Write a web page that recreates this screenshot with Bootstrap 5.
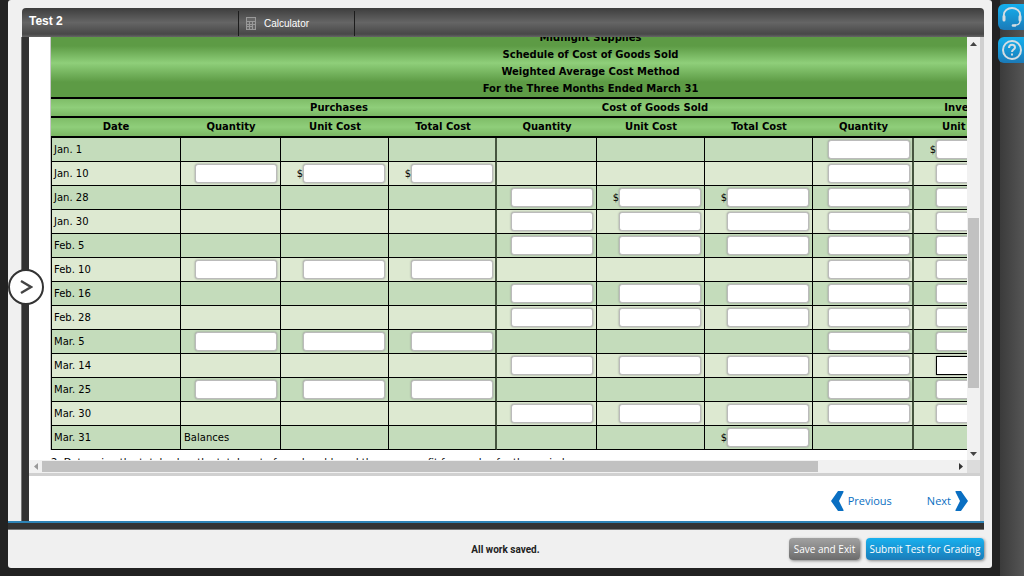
<!DOCTYPE html>
<html lang="en">
<head>
<meta charset="utf-8">
<meta name="viewport" content="width=device-width, initial-scale=1">
<title>Test 2</title>
<link href="https://cdn.jsdelivr.net/npm/bootstrap@5.3.0/dist/css/bootstrap.min.css" rel="stylesheet">
<style>
  body { background: #222; font-family: "Open Sans", sans-serif; font-size: 11px; }
  .shell { background: #f0f0f0; border-radius: 3px; margin: 0 8px 8px; padding-top: 8px; min-width: 0; }
  .tool-rail { width: 24px; background: linear-gradient(90deg, #3b3b3b, #555); padding-top: 4px; gap: 7px; }
  .rail-btn { width: 26px; height: 26px; margin-left: -2px; padding: 0 0 0 2px; border: 0; border-radius: 6px 0 0 6px; background: linear-gradient(#15b0ee, #1b7ab8); }
  .stage { margin: 0 8px 0 14px; }
  .top-bar { height: 29px; background: linear-gradient(#3d3d3d, #656565 50%, #484848 90%, #666); border-radius: 4px 4px 0 0; font-family: "Liberation Sans", sans-serif; color: #fff; }
  .test-title { width: 216px; padding: 4px 0 0 7px; font-size: 12px; line-height: 18px; font-weight: 700; }
  .calc-btn { width: 117px; height: 25px; padding: 0 0 0 7px; gap: 8px; border: 1px solid #1c1c1c; border-width: 0 1px; border-radius: 0; background: none; color: #fff; font-size: 10px; margin-top: 3px; }
  .work { background: #fff; border-left: 7px solid #333; border-right: 4px solid #d0d0d0; box-shadow: -1px 0 #777; }
  .sheet-view { min-width: 0; min-height: 0; }
  .sheet { margin: -8px 0 0 22px; width: 1079px; font-family: "DejaVu Sans", sans-serif; font-size: 10px; color: #000; }
  .ledger { table-layout: fixed; width: 1079px; border-collapse: separate; border-spacing: 0; box-shadow: -1px 0 #c8c8c8; }
  .ledger col.c-date { width: 130px; }
  .ledger col.c-qty { width: 100px; }
  .ledger col.c-cost { width: 108px; }
  .ledger col.c-stock { width: 101px; }
  .ledger th { padding: 0; text-align: center; font-weight: 700; line-height: 17px; border-bottom: 2px solid #000; background: linear-gradient(#7fbd68, #8fce7a 50%, #7ab663); }
  .ledger th.heading { background: linear-gradient(#5d9b45 25%, #8fcf7a 50%, #5d9b45 78%); }
  .ledger .columns th { line-height: 18px; }
  .ledger td { height: 24px; padding: 0 3px; border: 1px solid #000; border-width: 0 1px 1px 0; line-height: 20px; text-align: right; white-space: nowrap; }
  .ledger td:first-child { border-left-width: 1px; padding-left: 2px; }
  .ledger td:nth-child(4), .ledger td:nth-child(8) { border-right: 2px solid #46553f; padding-right: 2px; }
  .ledger td.words { text-align: left; }
  .ledger tr.odd td { background-color: #c4dcbb; }
  .ledger tr.even td { background-color: #dde9d1; }
  .entry { width: 82px; height: 19px; border: 1px solid #bbb; border-radius: 3px; background: #fff; box-shadow: 0 0 2px #888; padding: 0 3px; vertical-align: middle; }
  .entry.current { border-color: #000; border-radius: 0; }
  .next-task { padding-top: 6px; line-height: 14px; margin: 0; }
  .scroll-y { width: 13px; background: #f1f1f1; }
  .scroll-x { height: 13px; background: #f1f1f1; }
  .arrow-cell { flex: 0 0 13px; }
  .thumb { background: #c1c1c1; }
  .scroll-y .thumb { margin: 0 1px; }
  .scroll-x .thumb { margin: 1px 0; }
  .corner { flex: 0 0 13px; background: #dcdcdc; }
  .pager { height: 48px; border-top: 3px solid #d0d0d0; padding: 4px 12px 0 0; gap: 35px; }
  .pager a { color: #0a6fc2; font-size: 11px; line-height: 18px; }
  .base-rule { margin-right: 8px; height: 9px; background: #333; border-top: 2px solid #2e83b5; border-bottom: 1px solid #777; }
  .foot { height: 38px; padding: 0 8px 0 19px; }
  .saved { font-family: Roboto, sans-serif; font-size: 10px; font-weight: 700; color: #222; margin: 0; }
  .actions { gap: 6px; }
  .act { height: 22px; border: 0; border-radius: 4px; color: #fff; font-size: 10px; line-height: 20px; padding: 0; box-shadow: 1px 1px 3px #888; }
  .act-save { width: 71px; background: linear-gradient(#a2a2a2, #6c6c6c); }
  .act-submit { width: 118px; background: linear-gradient(#18b0ee, #1a7cb9); }
  .drawer-btn { left: 8px; top: 50%; width: 36px; height: 36px; margin-top: -19px; padding: 0; border: 2px solid #333; border-radius: 50%; background: #fff; }
</style>
</head>
<body class="vh-100 d-flex overflow-hidden">
<div class="shell d-flex flex-column flex-grow-1">
  <main class="stage d-flex flex-column flex-grow-1 sheet-view">
    <header class="top-bar d-flex flex-shrink-0">
      <div class="test-title">Test 2</div>
      <button type="button" class="calc-btn d-flex align-items-center">
        <svg width="10" height="13" viewBox="0 0 10 13"><path fill="#999" d="M0 0h10v13H0z"/><path fill="#666" d="M1 1h8v3H1zM1 5h2v2H1zM4 5h2v2H4zM7 5h2v2H7zM1 8h2v1H1zM4 8h2v1H4zM7 8h2v4H7zM1 10h2v2H1zM4 10h2v2H4z"/></svg>
        <span>Calculator</span>
      </button>
    </header>
    <div class="work d-flex flex-column flex-grow-1 sheet-view">
      <div class="d-flex flex-grow-1 sheet-view">
        <div class="flex-grow-1 overflow-hidden sheet-view">
          <div class="sheet">
            <table class="ledger">
              <colgroup><col class="c-date"><col class="c-qty"><col class="c-cost"><col class="c-cost"><col class="c-qty"><col class="c-cost"><col class="c-cost"><col class="c-stock"><col class="c-cost"><col class="c-cost"></colgroup>
              <thead>
                <tr><th class="heading" colspan="10">Midnight Supplies<br>Schedule of Cost of Goods Sold<br>Weighted Average Cost Method<br>For the Three Months Ended March 31</th></tr>
                <tr><th></th><th colspan="3">Purchases</th><th colspan="3">Cost of Goods Sold</th><th colspan="3">Inventory</th></tr>
                <tr class="columns"><th>Date</th><th>Quantity</th><th>Unit Cost</th><th>Total Cost</th><th>Quantity</th><th>Unit Cost</th><th>Total Cost</th><th>Quantity</th><th>Unit Cost</th><th>Total Cost</th></tr>
              </thead>
              <tbody id="entries"></tbody>
            </table>
            <p class="next-task">2. Determine the total sales, the total cost of goods sold, and the gross profit from sales for the period.</p>
          </div>
        </div>
        <div class="scroll-y d-flex flex-column flex-shrink-0">
          <div class="arrow-cell d-flex align-items-center justify-content-center"><svg width="7" height="4"><path fill="#444" d="M0 4h7L3.500 0z"/></svg></div>
          <div style="flex-grow:167"></div><div class="thumb" style="flex-grow:169"></div><div style="flex-grow:59"></div>
          <div class="arrow-cell d-flex align-items-center justify-content-center"><svg width="7" height="4"><path fill="#444" d="M0 0h7L3.500 4z"/></svg></div>
        </div>
      </div>
      <div class="scroll-x d-flex flex-shrink-0">
        <div class="arrow-cell d-flex align-items-center justify-content-center"><svg width="4" height="7"><path fill="#999" d="M4 0v7L0 3.500z"/></svg></div>
        <div class="thumb" style="flex-grow:776"></div><div style="flex-grow:136"></div>
        <div class="arrow-cell d-flex align-items-center justify-content-center"><svg width="4" height="7"><path fill="#333" d="M0 0v7L4 3.500z"/></svg></div>
        <div class="corner"></div>
      </div>
      <nav class="pager d-flex align-items-center justify-content-end flex-shrink-0">
        <a href="#previous" class="d-flex align-items-center gap-1 text-decoration-none"><svg width="13" height="20" viewBox="0 0 13 20"><path fill="#0a6fc2" d="M7 0h5q1 0 .5 1L8 10l4.500 9q.5 1-.5 1H7L0 10z"/></svg>Previous</a>
        <a href="#next" class="d-flex align-items-center gap-1 text-decoration-none">Next<svg width="13" height="20" viewBox="0 0 13 20"><path fill="#0a6fc2" d="M6 0H1Q0 0 .5 1L5 10 .5 19Q0 20 1 20h5l7-10z"/></svg></a>
      </nav>
    </div>
  </main>
  <div class="base-rule flex-shrink-0"></div>
  <footer class="foot row g-0 align-items-center flex-shrink-0">
    <div class="col-4"></div>
    <p class="saved col-4 text-center">All work saved.</p>
    <div class="actions col-4 d-flex justify-content-end">
      <button type="button" class="act act-save">Save and Exit</button>
      <button type="button" class="act act-submit">Submit Test for Grading</button>
    </div>
  </footer>
</div>
<aside class="tool-rail d-flex flex-column flex-shrink-0">
  <button type="button" class="rail-btn d-flex align-items-center justify-content-center" aria-label="Support"><svg width="22" height="22" viewBox="0 0 22 22" fill="none" stroke="#d5dde2" stroke-linecap="round"><path stroke-width="1.800" d="M2.800 10V9a8.200 7 0 0 1 16.400 0v1"/><path stroke-width="3" d="M3 10.500v3.500M19 10.500v3.500"/><path stroke-width="1.300" d="M19 15c0 2.500-2 4-5 4"/><path stroke-width="2.600" d="M12 19.500h2"/></svg></button>
  <button type="button" class="rail-btn d-flex align-items-center justify-content-center" aria-label="Help"><svg width="22" height="22" viewBox="0 0 22 22" fill="none" stroke="#d5dde2" stroke-width="2"><circle cx="11" cy="11" r="9"/><path d="M8 9c0-4.300 6-4.300 6-.5 0 2-3 2.200-3 4.500M11 14.500v2"/></svg></button>
</aside>
<button type="button" class="drawer-btn position-absolute d-flex align-items-center justify-content-center" aria-label="Open panel"><svg width="14" height="16" viewBox="0 0 14 16"><path d="M2 2l10 6-10 6" fill="none" stroke="#444" stroke-width="2.400"/></svg></button>
<script src="https://cdn.jsdelivr.net/npm/bootstrap@5.3.0/dist/js/bootstrap.bundle.min.js"></script>
<script>
  // One character per column after the date: "-" blank, "i" entry, "$" entry with a dollar sign
  const rows = [
    ["Jan. 1",  "------i$$"],
    ["Jan. 10", "i$$---iii"],
    ["Jan. 28", "---i$$iii"],
    ["Jan. 30", "---iiiiii"],
    ["Feb. 5",  "---iiiiii"],
    ["Feb. 10", "iii---iii"],
    ["Feb. 16", "---iiiiii"],
    ["Feb. 28", "---iiiiii"],
    ["Mar. 5",  "iii---iii"],
    ["Mar. 14", "---iiiiii"],
    ["Mar. 25", "iii---iii"],
    ["Mar. 30", "---iiiiii"],
    ["Mar. 31", "B----$--$"]
  ];
  const groups = ["Purchases", "Cost of goods sold", "Inventory"];
  const parts = ["quantity", "unit cost", "total cost"];
  document.getElementById("entries").innerHTML = rows.map(([date, cells], r) => {
    const tds = [...cells].map((kind, c) => {
      if (kind === "-") return "<td></td>";
      if (kind === "B") return '<td class="words">Balances</td>';
      const name = `${date} ${groups[Math.floor(c / 3)]} ${parts[c % 3]}`;
      const current = r === 9 && c === 7 ? " current" : "";
      return `<td>${kind === "$" ? "$" : ""}<input type="text" class="entry${current}" aria-label="${name}"></td>`;
    }).join("");
    return `<tr class="${r % 2 ? "even" : "odd"}"><td class="words">${date}</td>${tds}</tr>`;
  }).join("");
</script>
</body>
</html>
